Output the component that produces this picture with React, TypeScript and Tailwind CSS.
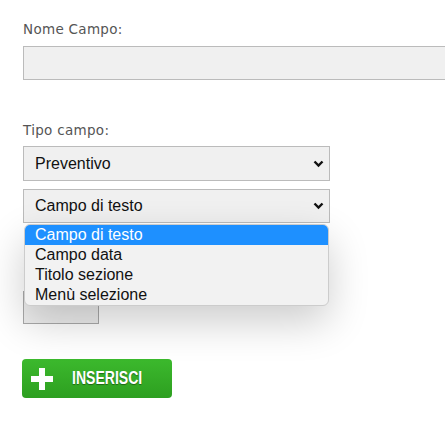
import React from 'react';

const options = ['Campo di testo', 'Campo data', 'Titolo sezione', 'Menù selezione'];

const Chevron = () => (
  <svg width="11" height="8" viewBox="0 0 11 8" className="absolute right-[5px] top-1/2 -translate-y-1/2">
    <path d="M1.5 1.5 L5.5 5.5 L9.5 1.5" fill="none" stroke="#111" strokeWidth="2.4" />
  </svg>
);

const App = () => {
  return (
    <main className="w-[445px] h-[430px] bg-white overflow-hidden pl-[23px] pt-[19px]">
      {/* Nome campo */}
      <div className="text-[13.5px] leading-[20px] text-[#555] font-['DejaVu_Sans',sans-serif] tracking-[0.3px]">Nome Campo:</div>
      <div className="mt-[7px] h-[34px] w-[440px] bg-[#f0f0f0] border border-[#bbb]" />

      {/* Tipo campo */}
      <div className="mt-[40px] text-[13.5px] leading-[20px] text-[#555] font-['DejaVu_Sans',sans-serif] tracking-[0.3px]">Tipo campo:</div>
      <div className="mt-[6px] flex flex-col w-[307px] font-['Liberation_Sans',Arial,sans-serif] text-[16px] text-[#111]">
        <div className="relative h-[35px] bg-[#f0f0f0] border border-[#bbb] flex items-center pl-[11px]">
          Preventivo
          <Chevron />
        </div>
        <div className="relative mt-[8px] h-[34px] bg-[#f0f0f0] border border-[#bbb] flex items-center pl-[11px]">
          Campo di testo
          <Chevron />
          {/* open list */}
          <div className="absolute left-0 top-[34px] w-[305px] z-10 bg-[#f2f2f2] border border-[#ccc] rounded-[6px] overflow-hidden shadow-[0_16px_40px_rgba(0,0,0,0.2)] text-[16px]">
            {options.map((o, i) => (
              <div key={o} className={i === 0 ? 'bg-[#1e90ff] text-white pl-[10px] h-[20px] leading-[19px]' : 'pl-[10px] h-[20px] leading-[20px] text-[#111]'}>
                {o}
              </div>
            ))}
          </div>
        </div>
        <div className="mt-[68px] h-[33px] w-[76px] bg-[#eee] border border-[#aaa]" />
      </div>

      {/* Button */}
      <button className="mt-[35px] -ml-[1px] w-[150px] h-[39px] rounded-[4px] bg-gradient-to-b from-[#3cb92d] to-[#2d9f20] flex items-center text-white">
        <svg width="24" height="24" viewBox="0 0 24 24" className="ml-[8px]">
          <path d="M9 1h6v8h8v6h-8v8H9v-8H1V9h8z" fill="#fff" />
        </svg>
        <span className="ml-[18px] origin-left scale-x-[0.78] font-['Liberation_Sans',sans-serif] font-bold text-[18px] [text-shadow:0_1px_1px_rgba(0,0,0,0.4)]">INSERISCI</span>
      </button>
    </main>
  );
};

export default App;
